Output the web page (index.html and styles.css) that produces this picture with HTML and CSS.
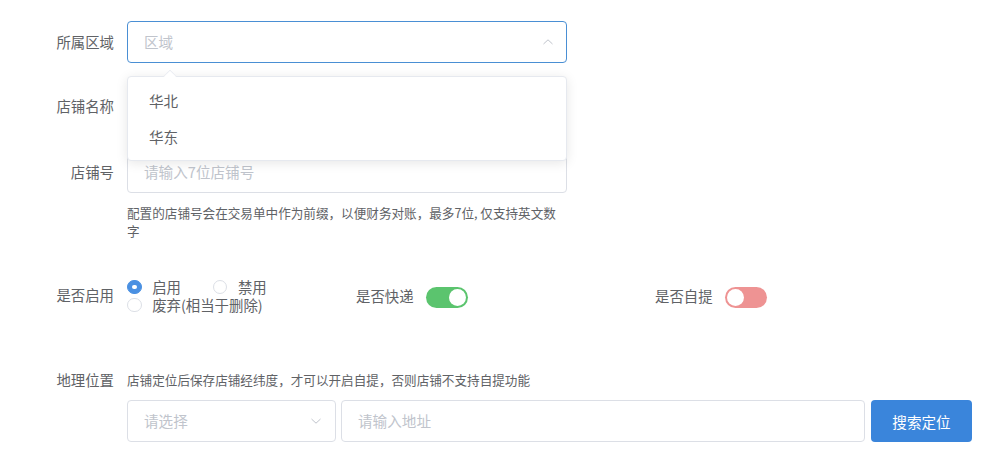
FILE: index.html
```html
<!DOCTYPE html>
<html lang="zh-CN">
<head>
<meta charset="utf-8">
<title>店铺表单</title>
<link rel="stylesheet" href="styles.css">
</head>
<body>
<div class="form">
  <div class="item item-1">
    <label class="lbl">所属区域</label>
    <div class="ctrl">
      <div class="input select is-focus">
        <span class="ph">区域</span>
        <svg class="chev" width="12" height="12" viewBox="0 0 12 12"><path d="M1.5 8 L6 3.8 L10.5 8" fill="none" stroke="#c0c4cc" stroke-width="1"/></svg>
      </div>
      <div class="popper">
        <div class="popper-arrow"></div>
        <ul class="options">
          <li>华北</li>
          <li>华东</li>
        </ul>
      </div>
    </div>
  </div>

  <div class="item item-2">
    <label class="lbl">店铺名称</label>
    <div class="ctrl">
      <div class="input"></div>
    </div>
  </div>

  <div class="item item-3">
    <label class="lbl">店铺号</label>
    <div class="ctrl">
      <div class="input"><span class="ph">请输入7位店铺号</span></div>
      <div class="hint">配置的店铺号会在交易单中作为前缀，以便财务对账，最多7位, 仅支持英文数字</div>
    </div>
  </div>

  <div class="grid-row">
    <div class="col col-radio">
      <label class="lbl lbl-radio">是否启用</label>
      <div class="radios">
        <span class="radio"><span class="dot checked"></span><span class="rtext">启用</span></span>
        <span class="radio"><span class="dot"></span><span class="rtext">禁用</span></span>
        <span class="radio"><span class="dot"></span><span class="rtext">废弃(相当于删除)</span></span>
      </div>
    </div>
    <div class="col">
      <label class="lbl lbl-auto">是否快递</label>
      <span class="switch on"><span class="knob"></span></span>
    </div>
    <div class="col">
      <label class="lbl lbl-auto">是否自提</label>
      <span class="switch off"><span class="knob"></span></span>
    </div>
  </div>

  <div class="geo-head">
    <label class="lbl lbl-line">地理位置</label>
    <span class="geo-hint">店铺定位后保存店铺经纬度，才可以开启自提，否则店铺不支持自提功能</span>
  </div>
  <div class="geo-row">
    <div class="input select geo-select">
      <span class="ph">请选择</span>
      <svg class="chev" width="12" height="12" viewBox="0 0 12 12"><path d="M1.5 4 L6 8.2 L10.5 4" fill="none" stroke="#c0c4cc" stroke-width="1"/></svg>
    </div>
    <div class="input geo-input"><span class="ph">请输入地址</span></div>
    <button class="btn" type="button">搜索定位</button>
  </div>
</div>
</body>
</html>
```

FILE: styles.css
```css
* { box-sizing: border-box; }
html, body { margin: 0; padding: 0; background: #fff; }
body {
  font-family: "Noto Sans CJK SC", "Noto Sans", sans-serif;
  color: #606266;
}
.form { padding: 21px 0 0 56px; }

.item { display: flex; align-items: flex-start; }
.item-1 { margin-bottom: 22px; }
.item-2 { margin-bottom: 24px; }

.lbl {
  flex: none;
  width: 71px;
  padding-right: 13px;
  text-align: right;
  white-space: nowrap;
  font-size: 14.4px;
  line-height: 42px;
  height: 42px;
  color: #606266;
}
.lbl-auto { width: auto; padding-right: 12px; }
.lbl-line { line-height: 18px; height: 18px; }

.ctrl { position: relative; width: 440px; }

.input {
  height: 42px;
  border: 1px solid #dcdfe6;
  border-radius: 4px;
  padding: 0 16px;
  display: flex;
  align-items: center;
  font-size: 14.6px;
  background: #fff;
}
.ph { color: #c0c4cc; line-height: 1; white-space: nowrap; }
.select { justify-content: space-between; padding-right: 12px; }
.is-focus { border-color: #4a8fd4; }
.chev { display: block; }

.popper {
  position: absolute;
  top: 55px;
  left: 0;
  width: 440px;
  background: #fff;
  border: 1px solid #e6e9ef;
  border-radius: 4px;
  box-shadow: 0 2px 12px rgba(0, 0, 0, 0.1);
  z-index: 10;
}
.popper-arrow {
  position: absolute;
  top: -7px;
  left: 36px;
  width: 12px;
  height: 12px;
  background: #fff;
  border-left: 1px solid #e6e9ef;
  border-top: 1px solid #e6e9ef;
  transform: rotate(45deg) scale(0.75);
}
.options { list-style: none; margin: 0; padding: 6px 0; position: relative; }
.options li {
  height: 35.5px;
  line-height: 35.5px;
  padding: 0 21px;
  font-size: 14.6px;
  color: #606266;
}

.hint {
  margin-top: 11px;
  font-size: 12.6px;
  line-height: 18px;
  color: #606266;
  width: 440px;
}

.grid-row {
  display: grid;
  grid-template-columns: 300px 299px 1fr;
  margin-top: 38px;
  align-items: center;
}
.col { display: flex; align-items: center; }
.col .lbl { line-height: 20px; height: 20px; }
.col-radio { align-items: flex-start; }
.col .lbl-radio { margin-top: 7px; }
.radios { width: 229px; font-size: 14.4px; line-height: 18px; }
.radio { display: inline-flex; align-items: center; margin-right: 28.5px; vertical-align: top; height: 18px; }
.dot {
  flex: none;
  width: 14.7px;
  height: 14.7px;
  border: 1px solid #dcdfe6;
  border-radius: 50%;
  background: #fff;
  position: relative;
}
.dot.checked { background: #4a90e2; border-color: #4a90e2; }
.dot.checked::after {
  content: "";
  position: absolute;
  left: 50%;
  top: 50%;
  width: 4.5px;
  height: 4.5px;
  margin: -2.25px 0 0 -2.25px;
  border-radius: 50%;
  background: #fff;
}
.rtext { padding-left: 10.5px; color: #606266; white-space: nowrap; }

.switch {
  flex: none;
  display: inline-block;
  position: relative;
  width: 42px;
  height: 21px;
  border-radius: 11px;
  margin-top: 2px;
}
.switch.on { background: #5bc46e; }
.switch.off { background: #ee9393; }
.knob {
  position: absolute;
  top: 2px;
  width: 17px;
  height: 17px;
  border-radius: 50%;
  background: #fff;
}
.switch.on .knob { right: 2px; }
.switch.off .knob { left: 2px; }

.geo-head { display: flex; align-items: center; margin-top: 57px; }
.geo-hint { font-size: 12.6px; line-height: 18px; color: #606266; white-space: nowrap; }

.geo-row { display: flex; margin: 11px 0 0 71px; }
.geo-select { width: 209px; margin-right: 5px; padding-right: 13px; }
.geo-input { width: 524px; margin-right: 6px; }
.btn {
  width: 101px;
  height: 42px;
  border: none;
  border-radius: 4px;
  background: #3a85db;
  color: #fff;
  font-family: inherit;
  font-size: 14.6px;
  padding: 0;
  cursor: pointer;
}
```
